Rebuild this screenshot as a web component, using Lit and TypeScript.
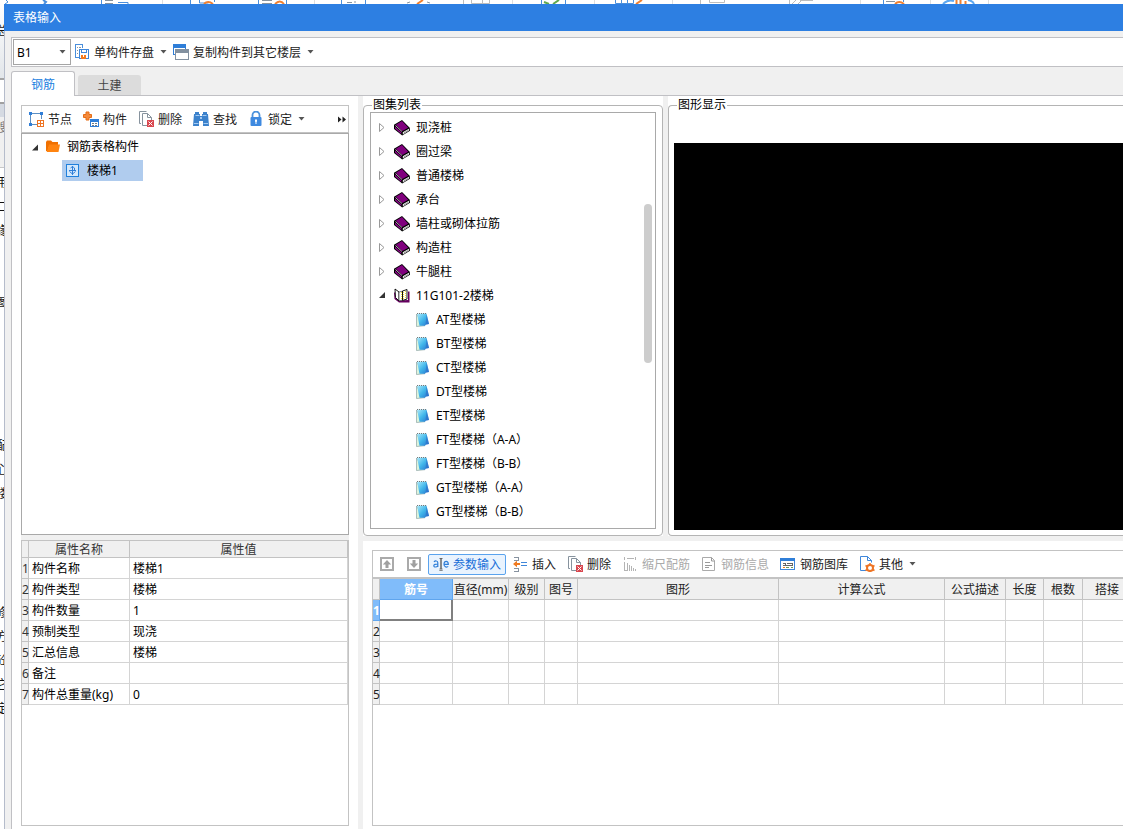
import { LitElement, html, css, svg, nothing } from "lit";
import { customElement, property, state } from "lit/decorators.js";

const caret = html`<svg class="caret" width="7" height="4" viewBox="0 0 7 4" aria-hidden="true"><path d="M.5 0h6l-3 3.6z" fill="#555" /></svg>`;

const icons: Record<string, unknown> = {
  save: svg`<g shape-rendering="crispEdges"><path d="M5.500 13.500h-4v-13h7v3" fill="#fff" stroke="#4a8fdc"/><path d="M3.500 3v1M3.500 6v1M3.500 9v1M5 3.500h2" stroke="#8a96a0"/><path d="M5.500 5.500h9v9h-9z" fill="#fff" stroke="#3f87da"/><path d="M7.500 5.500h5v3h-5z" fill="#fff" stroke="#3f87da"/><path d="M7 11h5v4H7z" fill="#f47a1f"/><path d="M9 11h1v2H9z" fill="#fff"/></g>`,
  copy: svg`<g shape-rendering="crispEdges"><path d="M.5.5h12v10H.5z" fill="#fff" stroke="#2f7ed8"/><path d="M0 0h13v4H0z" fill="#2f7ed8"/><path d="M2.500 5.500h13v10h-13z" fill="#fff" stroke="#8391a0"/><path d="M2 5h14v4H2z" fill="#8391a0"/></g>`,
  node: svg`<g shape-rendering="crispEdges"><path d="M2.500 2.500h11v11h-11z" fill="none" stroke="#5b8fc4"/><path d="M1 1h3v3H1zM12 1h3v3h-3zM1 12h3v3H1z" fill="#2f7ed8"/><path d="M9 8h7v8H9z" fill="#fff"/><path d="M9.500 9.500h6v6h-6z" fill="#fff" stroke="#ee7424"/><path d="M12.500 10v5M10 12.500h5" stroke="#ee7424"/></g>`,
  part: svg`<path d="M3 1h3v2.500h2.500v3H6V9H3V6.500H.5v-3H3z" fill="#f48a3c" stroke="#e66c14"/><g shape-rendering="crispEdges"><path d="M7.500 8.500h8v7h-8z" fill="#fff" stroke="#2f7ed8"/><path d="M7 8h9v3H7z" fill="#2f7ed8"/><path d="M9 12h2v1H9zM12 12h2v1h-2zM9 14h2v1H9zM12 14h2v1h-2z" fill="#6f7c88"/></g>`,
  del: svg`<g fill="#fff" stroke="#87939e"><path d="M3 12.500H1.500V.5h7"/><path d="M4.500 2.500h5l4 4v8h-9z"/><path d="M9.500 2.500v4h4" fill="none"/></g><g shape-rendering="crispEdges"><path d="M9 9h7v7H9z" fill="#d9474f"/></g><path d="M10.500 10.500l4 4m0-4l-4 4" stroke="#fff"/>`,
  find: svg`<path d="M2 1h4v2h1v2h2V3h1V1h4v2h1l1 12h-6v-5H6v5H0L1 3h1z" fill="#3c82cc"/><path d="M1 12.500h4.500m5 0H15M2.500 4.500h4m3 0h4" stroke="#a4caf2"/><path d="M7 6h2v2H7z" fill="#a4caf2"/>`,
  lock: svg`<path d="M4.500 7V4a3.500 3.500 0 0 1 7 0v3" fill="none" stroke="#4b92dc" stroke-width="1.800"/><rect x="2.500" y="6" width="11" height="9" rx="1" fill="#3f8ae0"/><path d="M7 8.500h2v2l-.5.500v2h-1v-2l-.5-.5z" fill="#fff"/>`,
  folder: svg`<path d="M1 3L2 1.500h4L7.500 3H13v3H4.500L2.500 12.500 1 12z" fill="#f07000"/><path d="M4 5.500h11L13.500 13H1.800z" fill="#ff8410"/>`,
  stair: svg`<path d="M1.500 1.500h12v12h-12z" fill="#d3e8fc" stroke="#2080dc" shape-rendering="crispEdges"/><path d="M7.500 3v9M4 7.500h7M5.500 5l2-1.500L9.500 5v3M4.500 8.500l3 2.500 3-2.500" fill="none" stroke="#2f7ed8"/>`,
  book: svg`<path d="M0 4.800L8 0l7.700 7.800.3 3-7.800 4.800L0 9z" fill="#000"/><path d="M1.800 4.800L8 1l6.200 6.800L8.300 11z" fill="#80007e"/><path d="M1 6.500l6.300 5.800v1.800L1 8.500z" fill="#8c0a8a"/><path d="M8.800 12.200L15 8.700v1.800l-6.200 4z" fill="#fff"/><path d="M9.500 13.200l5-3" stroke="#777" stroke-width=".8"/><path d="M1.500 5.500l6.500 6" stroke="#ecd2ec" stroke-width=".8"/>`,
  open: svg`<path d="M0 4.500h1.500L2 9l3 3.500 9-.5V3.500h1.500v11H5L.5 11z" fill="#65005f"/><path d="M1 1l4 3v9L1.500 9.500z" fill="#fff" stroke="#000" stroke-width=".9"/><path d="M5 4l3.500-.8V12L5 13z" fill="#fff" stroke="#222" stroke-width=".6"/><path d="M8.500 3L13 1.500V11l-4.500 1.500z" fill="#fff" stroke="#000" stroke-width=".9"/><path d="M7.500 4v8M9.500 4v8M11.500 3v8" stroke="#f0e030" stroke-dasharray="1 1"/>`,
  sheet: svg`<defs><linearGradient id="g" x1="0" y1="0" x2="1" y2="1"><stop offset="0" stop-color="#aeeafa"/><stop offset=".5" stop-color="#41b7ea"/><stop offset="1" stop-color="#2673cf"/></linearGradient></defs><path d="M.5 2v12.500l8.500-.8L7 12z" fill="#dcf4dc" stroke="#8ca4a4" stroke-width=".7"/><path d="M1 1.500h9.500L13 12l-3 .5-1 1.200H3.500z" fill="url(#g)"/><path d="M10.500 2L13 12l-3.500.8z" fill="#2e68c4" opacity=".55"/><path d="M1 1.500h9.500" stroke="#777" stroke-dasharray="1 1"/>`,
  up: svg`<g shape-rendering="crispEdges"><path d="M2 2h12v12H2z" fill="#fff" stroke="#aaa" stroke-width="2"/></g><path d="M8 4l4.200 4.500H9.500V12h-3V8.500H3.800z" fill="#a0a0a0"/>`,
  down: svg`<g shape-rendering="crispEdges"><path d="M2 2h12v12H2z" fill="#fff" stroke="#aaa" stroke-width="2"/></g><path d="M8 12l4.200-4.500H9.500V4h-3v3.500H3.800z" fill="#a0a0a0"/>`,
  param: svg`<g fill="none" stroke="#2f7ed8" stroke-width="1.200"><path d="M1 6c1-1.500 3.800-1.500 3.800.8V11M4.800 8C2.500 8 .8 8.300.8 9.700c0 1.800 3 1.600 4 0M11.300 8.300h4C15.300 4.300 11 4.300 11 8.200c0 3.300 3 3.200 4.200 2.200"/></g><path d="M6.500 2.500H8V13H6.500M9.500 2.500H8V13h1.500M6.500 14.500h1L8 14l.5.500h1" fill="none" stroke="#666"/>`,
  insert: svg`<g shape-rendering="crispEdges" fill="none"><path d="M2 1.500h4.500v3H2M2 15.500h4.500v-3H2" stroke="#8792a0"/><path d="M9 6.500h6M9 9.500h6" stroke="#3f87da"/></g><path d="M1 8l4-3.300v2.300h3v2H5v2.300z" fill="#f07a20"/>`,
  scale: svg`<g fill="none" stroke="#b4b4b4" shape-rendering="crispEdges"><path d="M2.500 1v3M13.500 1v3M5 2.500h7M2.500 6v8.500H5M5.500 7v8M7.500 9v6M9.500 10v5M11.500 12v3M13.500 13v2"/></g>`,
  info: svg`<path d="M1.500 1.500h9l3 3v10h-12z" fill="#fff" stroke="#aaa"/><path d="M10.500 1.500v3.500h3M4 6.500h5M4 9.500h7M4 11.500h4" fill="none" stroke="#999"/>`,
  library: svg`<g shape-rendering="crispEdges"><path d="M.5 2.500h14v11H.5z" fill="#fff" stroke="#3f87da"/><path d="M0 2h15v3H0z" fill="#2f7ed8"/><path d="M3 7.500h2v2H2.500M7 7.500h5.500v2H5" fill="none" stroke="#666"/><path d="M3 11.500h2" stroke="#f07a20"/><path d="M6 11.500h3M11 11.500h2" stroke="#6c9a58"/></g>`,
  other: svg`<path d="M1.500.5h7l4 4v10h-11z" fill="#fff" stroke="#3f87da"/><path d="M8.500.5v4h4" fill="none" stroke="#3f87da"/><path d="M8 6.500h6.500V16H7z" fill="#fff"/><circle cx="11" cy="12" r="3" fill="#fff" stroke="#ee7424" stroke-width="2"/><path d="M11 7v2M11 15v1M6.500 9.500l1.800 1M15.500 9.500l-1.800 1M6.500 14.500l1.800-1M15.500 14.500l-1.800-1" stroke="#ee7424" stroke-width="1.500"/>`,
};

const icon = (name: string) =>
  html`<svg class="icon" width="16" height="16" viewBox="0 0 16 16" aria-hidden="true">${icons[name]}</svg>`;

const shared = css`
  * { box-sizing: border-box; }
  svg { display: block; flex: none; }
  button {
    font: inherit;
    color: inherit;
    background: none;
    border: 1px solid transparent;
    border-radius: 2px;
    margin: 0;
    padding: 0 4px;
    display: flex;
    align-items: center;
    gap: 4px;
    white-space: nowrap;
    flex: none;
  }
`;

@customElement("tool-button")
class ToolButton extends LitElement {
  @property() icon = "";
  @property() label = "";
  @property() hint = "";
  @property({ type: Boolean }) menu = false;
  @property({ type: Boolean }) active = false;
  @property({ type: Boolean }) disabled = false;

  static styles = [
    shared,
    css`
      :host { display: block; flex: none; }
      button { height: 21px; padding: 0 var(--tool-pad, 4px); color: #222; }
      span { padding-top: 2px; }
      .active { color: #1a6fd8; border-color: #5aa3ee; background: #e9f3fe; }
      button:disabled { color: #aaa; }
      .caret { margin-left: 2px; }
    `,
  ];

  render() {
    return html`<button
      type="button"
      class=${this.active ? "active" : ""}
      ?disabled=${this.disabled}
      aria-label=${this.label || this.hint}
    >
      ${icon(this.icon)}${this.label ? html`<span>${this.label}</span>` : nothing}${this.menu ? caret : nothing}
    </button>`;
  }
}

@customElement("atlas-tree")
class AtlasTree extends LitElement {
  private books = ["现浇桩", "圈过梁", "普通楼梯", "承台", "墙柱或砌体拉筋", "构造柱", "牛腿柱"];
  private sheets = ["AT型楼梯", "BT型楼梯", "CT型楼梯", "DT型楼梯", "ET型楼梯", "FT型楼梯（A-A）", "FT型楼梯（B-B）", "GT型楼梯（A-A）", "GT型楼梯（B-B）"];

  static styles = [
    shared,
    css`
      :host { display: block; position: relative; overflow: hidden; border: 1px solid #a9a9a9; padding: 3px 8px; color: #000; }
      ul { list-style: none; margin: 0; padding: 0; }
      .row { display: flex; align-items: center; height: 24px; }
      .row .icon { margin: 0 6px; }
      .twist { margin-right: 1px; }
      .sheets { padding-left: 30px; }
      .sheets .row .icon { margin: 0 4px 0 7px; }
      .thumb { position: absolute; right: 3px; top: 22%; height: 38.3%; width: 8px; border-radius: 4px; background: #cdcdcd; }
    `,
  ];

  render() {
    return html`<ul>
        ${this.books.map(
          (b) => html`<li class="row">
            <svg class="twist" width="8" height="10" viewBox="0 0 8 10"><path d="M.5.5v8L5 4.500z" fill="#fff" stroke="#999" /></svg>
            ${icon("book")}<span>${b}</span>
          </li>`
        )}
        <li>
          <div class="row">
            <svg class="twist" width="8" height="10" viewBox="0 0 8 10"><path d="M6 1v6H0z" fill="#333" /></svg>
            ${icon("open")}<span>11G101-2楼梯</span>
          </div>
          <ul class="sheets">
            ${this.sheets.map((s) => html`<li class="row">${icon("sheet")}<span>${s}</span></li>`)}
          </ul>
        </li>
      </ul>
      <div class="thumb"></div>`;
  }
}

@customElement("property-table")
class PropertyTable extends LitElement {
  private rows = [
    ["构件名称", "楼梯1"],
    ["构件类型", "楼梯"],
    ["构件数量", "1"],
    ["预制类型", "现浇"],
    ["汇总信息", "楼梯"],
    ["备注", ""],
    ["构件总重量(kg)", "0"],
  ];

  static styles = [
    shared,
    css`
      :host { display: block; border: 1px solid #c3c3c3; overflow: hidden; }
      table { table-layout: fixed; width: 100%; border-collapse: separate; border-spacing: 0; line-height: 15px; }
      .num { width: 7px; }
      .name { width: 101px; }
      th, td { padding: 1px 0 0; font-weight: normal; white-space: nowrap; border: solid #d4d4d4; border-width: 0 1px 1px 0; }
      th { background: #f0f0f0; color: #333; border-color: #c3c3c3; }
      thead th { height: 17px; }
      td { height: 21px; padding-left: 3px; color: #000; }
    `,
  ];

  render() {
    return html`<table>
      <colgroup><col class="num" /><col class="name" /><col /></colgroup>
      <thead><tr><th></th><th scope="col">属性名称</th><th scope="col">属性值</th></tr></thead>
      <tbody>
        ${this.rows.map(([k, v], i) => html`<tr><th scope="row">${i + 1}</th><td>${k}</td><td>${v}</td></tr>`)}
      </tbody>
    </table>`;
  }
}

@customElement("rebar-table")
class RebarTable extends LitElement {
  private columns: [string, number][] = [
    ["筋号", 73], ["直径(mm)", 56], ["级别", 36], ["图号", 33], ["图形", 201],
    ["计算公式", 166], ["公式描述", 61], ["长度", 38], ["根数", 39], ["搭接", 49],
  ];

  static styles = [
    shared,
    css`
      :host { display: block; overflow: hidden; }
      table { table-layout: fixed; width: 0; border-collapse: separate; border-spacing: 0; line-height: 16px; }
      .num { width: 7px; }
      th, td { padding: 2px 0 0; height: 21px; font-weight: normal; white-space: nowrap; border: solid #d4d4d4; border-width: 0 1px 1px 0; }
      th { background: #f0f0f0; color: #222; border-color: #c3c3c3; }
      .current { background: #80bcfa; border-color: #5fa5ee; color: #fff; font-weight: bold; }
      .cell { border: solid #808080; border-width: 0 2px 2px 0; }
    `,
  ];

  render() {
    return html`<table>
      <colgroup><col class="num" />${this.columns.map(([, w]) => html`<col style="width:${w}px" />`)}</colgroup>
      <thead>
        <tr><th></th>${this.columns.map(([c], i) => html`<th scope="col" class=${i ? "" : "current"}>${c}</th>`)}</tr>
      </thead>
      <tbody>
        ${[1, 2, 3, 4, 5].map(
          (r) => html`<tr>
            <th scope="row" class=${r === 1 ? "current" : ""}>${r}</th>
            ${this.columns.map((_, i) => html`<td class=${r === 1 && i === 0 ? "cell" : ""}></td>`)}
          </tr>`
        )}
      </tbody>
    </table>`;
  }
}

@customElement("app-root")
class AppRoot extends LitElement {
  @state() private tab = 0;

  static styles = [
    shared,
    css`
      :host {
        display: grid;
        grid-template: 4px minmax(0, 1fr) / 4px minmax(0, 1fr);
        height: 100vh;
        overflow: hidden;
        background: #fff;
        font: 12px/18px "Noto Sans", "Noto Sans CJK SC", sans-serif;
        color: #222;
      }
      .ribbon { grid-column: 1 / 3; overflow: hidden; background: #fff; }
      .dock { overflow: hidden; display: flex; flex-direction: column; align-items: center; color: #111; background: #fff; }
      .dock-head { align-self: stretch; flex: none; display: flex; flex-direction: column; align-items: center; height: 76px; padding-top: 18px; background: linear-gradient(#fff, #e2e6ea); border-bottom: 2px solid #a5a5a5; }
      .dock-tabs { align-self: stretch; flex: none; display: flex; flex-direction: column; align-items: center; height: 88px; margin-bottom: 6px; border-bottom: 1px solid #c8c8c8; background: linear-gradient(#fff 22px, #a0a0a0 22px 24px, #d5dae2 24px 37px, #f0f0f0 37px); color: #777; padding-top: 39px; }
      .dock span { flex: none; height: 18px; width: 12px; }
      .g6 { margin-bottom: 6px; }
      .g54 { margin-bottom: 54px; }
      .g125 { margin-bottom: 125px; }
      .g101 { margin-bottom: 101px; }
      .window { display: flex; flex-direction: column; min-width: 0; min-height: 0; background: #f0f0f0; }
      .title { flex: none; margin: 0; height: 27px; padding: 0 9px; font-size: 12px; font-weight: normal; line-height: 28px; color: #fff; background: #2d7fe2; }
      .frame { flex: 1; min-height: 0; display: flex; flex-direction: column; border-left: 1px solid #b5bccb; padding: 6px 0 0 6px; }
      .bar { --tool-pad: 2px; flex: none; display: flex; align-items: center; height: 30px; border: 1px solid #c0c0c4; border-right: 0; background: #fff; padding-left: 1px; }
      .floor { display: grid; align-items: center; flex: none; width: 58px; }
      .floor > * { grid-area: 1 / 1; }
      .floor .caret { justify-self: end; margin-right: 5px; pointer-events: none; }
      select { appearance: none; font: inherit; color: #000; width: 100%; height: 26px; padding: 2px 3px 0; border: 1px solid #a5a5a5; border-radius: 0; background: #fff; }
      .tabs { flex: none; display: flex; align-items: flex-end; height: 29px; box-shadow: inset 0 -1px #c0c0c4; }
      .tab { justify-content: center; width: 63px; height: 20px; margin: 0 0 1px 3px; padding: 2px 0 0; border: 0; border-radius: 3px 3px 0 0; background: #dcdcdc; color: #444; }
      .tab.on { width: 64px; height: 25px; margin: 0; border: 1px solid #c0c0c4; border-bottom: 0; background: #fff; color: #2080e0; }
      .body { flex: 1; min-height: 0; display: grid; grid-template-columns: 346px minmax(0, 1fr); column-gap: 5px; border-left: 1px solid #c0c0c4; }
      .left { display: flex; flex-direction: column; padding: 9px 9px 3px; background: #fff; min-height: 0; }
      .upper { flex: 430 1 0; min-height: 0; display: flex; flex-direction: column; }
      .split { flex: none; height: 5px; background: #f0f0f0; }
      .left property-table { flex: 284 1 0; min-height: 0; }
      .tools { flex: none; display: flex; align-items: center; gap: 1px; height: 28px; padding: 0 1px; border: 1px solid #c3c3c3; overflow: hidden; background: #fff; }
      .more { margin-left: auto; padding: 0; }
      .tree { flex: 1; list-style: none; margin: 0; padding: 1px 10px; border: 1px solid #a9a9a9; color: #000; }
      .tree li, .leaf { display: flex; align-items: center; height: 24px; }
      .tree .child { height: 23px; }
      .root .icon { margin: 0 6px; }
      .leaf { height: 21px; width: 81px; gap: 6px; padding-left: 3px; margin-left: 30px; background: #b0ccee; }
      .right { display: flex; flex-direction: column; min-width: 0; min-height: 0; }
      .views { flex: 440 1 0; min-height: 0; display: grid; grid-template-columns: 300px minmax(0, 1fr); gap: 5px; }
      .view { display: flex; min-width: 0; min-height: 0; padding-top: 2px; background: #fff; }
      fieldset { flex: 1; display: flex; min-width: 0; min-height: 0; margin: 0; padding: 0 6px 6px; border: 1px solid #b4b4b4; border-radius: 4px; }
      legend { margin-left: 2px; padding: 0 1px; height: 14px; line-height: 14px; color: #000; }
      fieldset atlas-tree { flex: 1; min-width: 0; }
      .open { border-right: 0; border-radius: 4px 0 0 4px; padding: 0 0 5px 5px; }
      .open legend { margin-left: 3px; }
      .canvas { flex: 1; margin-top: 31px; background: #000; }
      .grid { flex: 276 1 0; min-height: 0; display: flex; flex-direction: column; padding: 9px 0 3px 9px; background: #fff; }
      .sheet { flex: 1; min-height: 0; display: flex; flex-direction: column; border: 1px solid #c3c3c3; border-right: 0; }
      .sheet .tools { height: 28px; border: 0; border-bottom: 2px solid #c3c3c3; padding: 0 1px; }
      .sheet rebar-table { flex: 1; min-height: 0; }
    `,
  ];

  private ribbon() {
    return html`<svg width="1123" height="4" viewBox="0 0 1123 4" aria-hidden="true" fill="none">
      <path d="M162.500 0v4M314.500 0v4M512.500 0v4M594.500 0v4M672.500 0v4M860.500 0v4M930.500 0v4M988.500 0v4" stroke="#dedede" />
      <path d="M6 0l2 2-3 2M101.500 0v4M118 2.500h10v2M190.500 0v4M199.500 0v3h9M214.500 0v2M258.500 0v4M286.500 0v4M341.500 0v4M365.500 0v4M541.500 0v4M565.500 0v4M615.500 0v3.500h18V0M621.500 0v4M627.500 0v4M883.500 0v4M903.500 0v2" stroke="#4a8fdc" />
      <path d="M43 0l3 2-2 2" stroke="#4a8fdc" stroke-width="2" />
      <path d="M105 .5h8M105 3.500h8M262 .5h10M262 3.500h10M347 2.500h5M355 1v2M407 3l3-1M427 2l3 1M886 1.500h9" stroke="#87939e" />
      <path d="M463.500 0v4M471.500 0v3.500h18V0M482.500 0v4M700.500 0v4M709.500 0v2.500h15V0M789.500 4V0M792 4l4-4M798 4l4-4M800 .5h13" stroke="#bdbdbd" />
      <path d="M204 4q4-4 9 0M275 4q5-5 9 0M417 4l6-4M636 4l6-4M895 4q4-4 9 0M956.500 0v4M960.500 0v4M965.500 1v3" stroke="#f08030" stroke-width="2" />
      <path d="M544 2l5 2M553 4l6-4" stroke="#62a84e" stroke-width="2" />
      <path d="M943 4q5-5 11-3M968 0q5 1 6 4" stroke="#5ea8f0" stroke-width="2" />
    </svg>`;
  }

  render() {
    return html`
      <div class="ribbon">${this.ribbon()}</div>
      <div class="dock" aria-hidden="true">
        <div class="dock-head"><span>总</span></div>
        <div class="dock-tabs"><span>搜</span></div>
        <span class="g6">用</span><span class="g6">二</span><span class="g54">缘</span>
        <span class="g125">图</span>
        <span class="g6">配</span><span class="g6">心</span><span class="g101">楼</span>
        <span class="g6">修</span><span class="g6">方</span><span class="g6">砼</span><span class="g6">它</span><span>定</span>
      </div>
      <main class="window">
        <h1 class="title">表格输入</h1>
        <div class="frame">
          <div class="bar">
            <label class="floor">
              <select aria-label="楼层"><option>B1</option></select>
              ${caret}
            </label>
            <tool-button icon="save" label="单构件存盘" menu></tool-button>
            <tool-button icon="copy" label="复制构件到其它楼层" menu></tool-button>
          </div>
          <div class="tabs" role="tablist">
            ${["钢筋", "土建"].map(
              (t, i) => html`<button
                type="button"
                role="tab"
                class="tab ${i === this.tab ? "on" : ""}"
                aria-selected=${i === this.tab}
                @click=${() => (this.tab = i)}
              >${t}</button>`
            )}
          </div>
          <div class="body">
            <section class="left">
              <div class="upper">
                <div class="tools">
                  <tool-button icon="node" label="节点"></tool-button>
                  <tool-button icon="part" label="构件"></tool-button>
                  <tool-button icon="del" label="删除"></tool-button>
                  <tool-button icon="find" label="查找"></tool-button>
                  <tool-button icon="lock" label="锁定" menu></tool-button>
                  <button class="more" type="button" aria-label="更多">
                    <svg width="8" height="7" viewBox="0 0 8 7"><path d="M0 .5v6l3.500-3zM4.500.5v6l3.500-3z" fill="#222" /></svg>
                  </button>
                </div>
                <ul class="tree">
                  <li class="root">
                    <svg width="7" height="8" viewBox="0 0 7 8"><path d="M6 1.500v6H0z" fill="#333" /></svg>
                    ${icon("folder")}<span>钢筋表格构件</span>
                  </li>
                  <li class="child"><div class="leaf">${icon("stair")}<span>楼梯1</span></div></li>
                </ul>
              </div>
              <div class="split"></div>
              <property-table></property-table>
            </section>
            <section class="right">
              <div class="views">
                <div class="view"><fieldset><legend>图集列表</legend><atlas-tree></atlas-tree></fieldset></div>
                <div class="view"><fieldset class="open"><legend>图形显示</legend><div class="canvas"></div></fieldset></div>
              </div>
              <div class="split"></div>
              <div class="grid">
                <div class="sheet">
                  <div class="tools">
                    <tool-button icon="up" hint="上移"></tool-button>
                    <tool-button icon="down" hint="下移"></tool-button>
                    <tool-button icon="param" label="参数输入" active></tool-button>
                    <tool-button icon="insert" label="插入"></tool-button>
                    <tool-button icon="del" label="删除"></tool-button>
                    <tool-button icon="scale" label="缩尺配筋" disabled></tool-button>
                    <tool-button icon="info" label="钢筋信息" disabled></tool-button>
                    <tool-button icon="library" label="钢筋图库"></tool-button>
                    <tool-button icon="other" label="其他" menu></tool-button>
                  </div>
                  <rebar-table></rebar-table>
                </div>
              </div>
            </section>
          </div>
        </div>
      </main>
    `;
  }
}
